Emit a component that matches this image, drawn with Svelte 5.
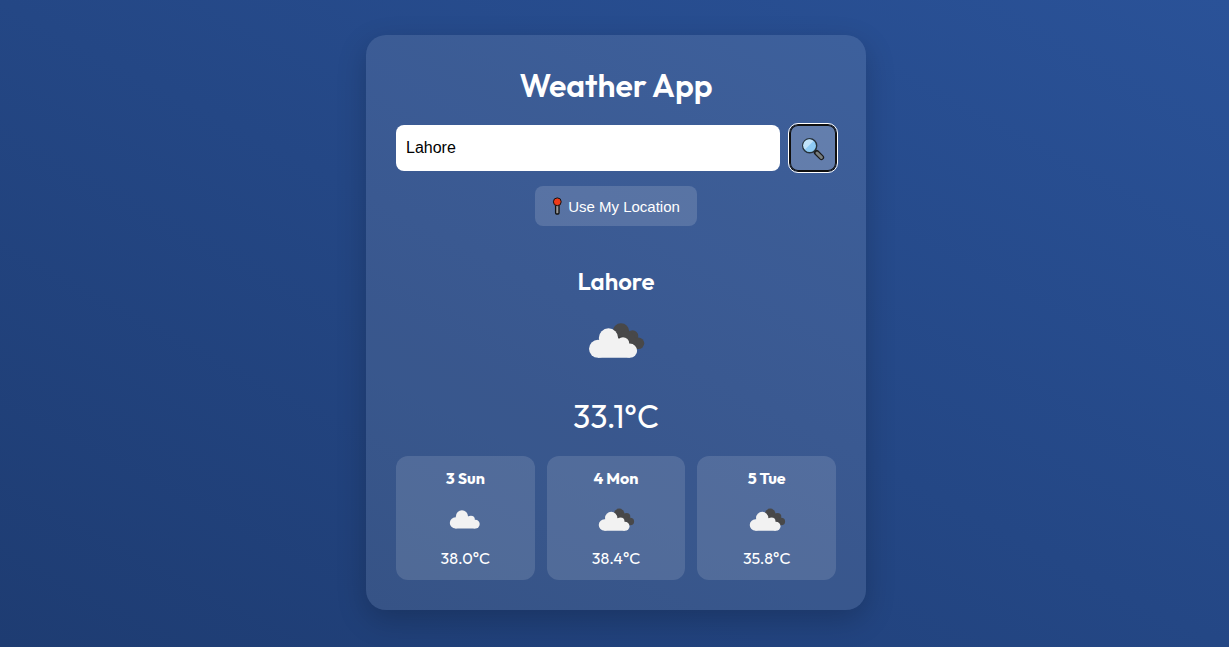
<script>
  let city = $state('Lahore');
  const days = [
    { label: '3 Sun', temp: '38.0°C', broken: false },
    { label: '4 Mon', temp: '38.4°C', broken: true },
    { label: '5 Tue', temp: '35.8°C', broken: true }
  ];
</script>

{#snippet cloud(broken)}
  <svg class="cloud" viewBox="0 0 100 100" aria-hidden="true">
    {#if broken}
      <g fill="#484849">
        <circle cx="55" cy="40.500" r="8.300" />
        <circle cx="66.500" cy="45" r="5.800" />
        <circle cx="72.400" cy="52.300" r="5.800" />
        <path d="M50 45L60 38L68 44L73 58H60Z" />
      </g>
    {/if}
    <g transform={broken ? undefined : 'translate(4 -1.500) scale(.97)'}>
      {#if broken}
        <g fill="none" stroke="#222" stroke-opacity=".4" stroke-width="1">
          <path d="M48.500 39.200Q51.500 42 52.200 46.800Q56 45.200 59.500 47Q63.500 49.500 63.300 52.500Q69 52.500 71 57.800" />
        </g>
      {/if}
      <g fill="#f2f2f2">
        <circle cx="32" cy="57.800" r="9" />
        <circle cx="42.500" cy="47" r="9.700" />
        <circle cx="57" cy="52.500" r="6.300" />
        <circle cx="64" cy="59.700" r="7.100" />
        <path d="M32 50L42 42L52 47L60 54L64 66.800H32Z" />
      </g>
    </g>
  </svg>
{/snippet}

<main>
  <section class="card">
    <h1>Weather App</h1>
    <form class="search" onsubmit={(e) => e.preventDefault()}>
      <input type="text" aria-label="City" bind:value={city} />
      <button class="find" aria-label="Search">
        <svg viewBox="0 0 24 24" width="24" height="24" aria-hidden="true">
          <path d="M12.500 13L15 15.500" stroke="#222" stroke-width="2.600" />
          <path d="M15.500 15.500L20.400 20.400" stroke="#1b1b1b" stroke-width="5.400" stroke-linecap="round" />
          <path d="M16 16L20.400 20.400" stroke="#777d7d" stroke-width="3" stroke-linecap="round" />
          <circle cx="8.700" cy="8.700" r="7" fill="#8ecbf4" stroke="#26323a" stroke-width="1.400" />
          <path d="M4 12.500L12.500 4A6 6 0 0 0 4 12.500Z" fill="#c0e3fa" />
        </svg>
      </button>
    </form>
    <button class="locate">
      <svg viewBox="0 0 11 18" width="11" height="18" aria-hidden="true">
        <rect x="3.600" y="7" width="3.400" height="10" rx="1" fill="#999" stroke="#111" stroke-width="1.300" />
        <circle cx="5.300" cy="4.800" r="3.900" fill="#f03a17" stroke="#111" stroke-width="1" />
      </svg>
      <span>Use My Location</span>
    </button>
    <div class="current">
      <h2>Lahore</h2>
      {@render cloud(true)}
      <p>33.1°C</p>
    </div>
    <div class="forecast">
      {#each days as day}
        <article>
          <strong>{day.label}</strong>
          {@render cloud(day.broken)}
          <span>{day.temp}</span>
        </article>
      {/each}
    </div>
  </section>
</main>

<style>
  :global(body) {
    margin: 0;
  }
  main {
    box-sizing: border-box;
    min-height: 100vh;
    padding: 20px 0 22px 3px;
    display: flex;
    align-items: center;
    justify-content: center;
    background: linear-gradient(to top right, #1e3c72, #2a5298);
    color: #fff;
    font-family: Outfit, Lato, sans-serif;
    font-size: 16px;
  }
  .card {
    box-sizing: border-box;
    width: 100%;
    max-width: 500px;
    padding: 30px;
    border-radius: 20px;
    background: rgba(255, 255, 255, 0.1);
    box-shadow: 0 10px 30px rgba(0, 0, 0, 0.2);
    display: flex;
    flex-direction: column;
  }
  h1 {
    margin: 0 0 20px;
    font-size: 32px;
    line-height: 40px;
    font-weight: 600;
    text-align: center;
  }
  .search {
    display: flex;
    gap: 10px;
    margin-bottom: 15px;
  }
  input {
    flex: 1;
    min-width: 0;
    box-sizing: border-box;
    height: 46px;
    padding: 0 10px;
    border: 0;
    border-radius: 8px;
    background: #fff;
    color: #000;
    font: 16px 'Liberation Sans', sans-serif;
  }
  button {
    border: 0;
    border-radius: 8px;
    color: #fff;
    font: 15px 'Liberation Sans', sans-serif;
    cursor: pointer;
    display: flex;
    align-items: center;
    justify-content: center;
    background: rgba(255, 255, 255, 0.15);
  }
  .find {
    width: 46px;
    padding: 2px 0 0;
    background: rgba(255, 255, 255, 0.2);
    outline: 1px solid #fff;
    outline-offset: 1px;
    box-shadow: 0 0 0 1px #101010, inset 0 0 0 1px #101010;
  }
  .locate {
    align-self: center;
    height: 40px;
    padding: 0 17px;
    gap: 5px;
  }
  .current {
    display: flex;
    flex-direction: column;
    align-items: center;
    padding-top: 40px;
  }
  h2 {
    margin: 0;
    font-size: 24px;
    line-height: 30px;
    font-weight: 600;
  }
  .current .cloud {
    width: 100px;
    height: 100px;
    margin: -5px 0 5px;
  }
  .current p {
    margin: 0 0 20px;
    font-size: 32px;
    line-height: 40px;
  }
  .forecast {
    display: grid;
    grid-template-columns: repeat(3, 1fr);
    gap: 12px;
  }
  article {
    display: flex;
    flex-direction: column;
    align-items: center;
    padding: 12px 10px;
    border-radius: 12px;
    background: rgba(255, 255, 255, 0.13);
    line-height: 20px;
  }
  article .cloud {
    width: 64px;
    height: 64px;
    margin-bottom: -4px;
  }
</style>
